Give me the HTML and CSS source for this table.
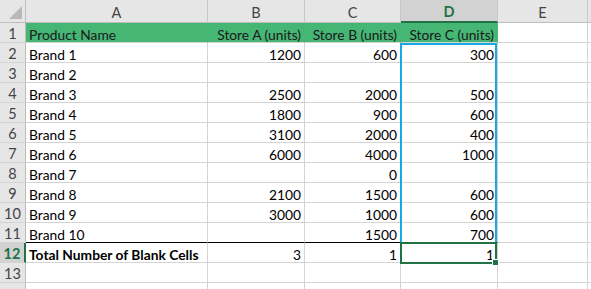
FILE: index.html
```html
<!DOCTYPE html>
<html>
<head>
<meta charset="utf-8">
<link rel="stylesheet" href="styles.css">
</head>
<body>
<div class="sheet">
  <div class="corner"><span class="tri"></span></div>
  <div class="ch">A</div>
  <div class="ch">B</div>
  <div class="ch">C</div>
  <div class="ch sel">D</div>
  <div class="ch">E</div>
  <div class="ch last"></div>

  <div class="rh">1</div>
  <div class="c hd">Product Name</div>
  <div class="c hd r">Store A (units)</div>
  <div class="c hd r">Store B (units)</div>
  <div class="c hd r">Store C (units)</div>
  <div class="c"></div><div class="c last"></div>

  <div class="rh">2</div>
  <div class="c">Brand 1</div><div class="c r">1200</div><div class="c r">600</div><div class="c r">300</div>
  <div class="c"></div><div class="c last"></div>

  <div class="rh">3</div>
  <div class="c">Brand 2</div><div class="c r"></div><div class="c r"></div><div class="c r"></div>
  <div class="c"></div><div class="c last"></div>

  <div class="rh">4</div>
  <div class="c">Brand 3</div><div class="c r">2500</div><div class="c r">2000</div><div class="c r">500</div>
  <div class="c"></div><div class="c last"></div>

  <div class="rh">5</div>
  <div class="c">Brand 4</div><div class="c r">1800</div><div class="c r">900</div><div class="c r">600</div>
  <div class="c"></div><div class="c last"></div>

  <div class="rh">6</div>
  <div class="c">Brand 5</div><div class="c r">3100</div><div class="c r">2000</div><div class="c r">400</div>
  <div class="c"></div><div class="c last"></div>

  <div class="rh">7</div>
  <div class="c">Brand 6</div><div class="c r">6000</div><div class="c r">4000</div><div class="c r">1000</div>
  <div class="c"></div><div class="c last"></div>

  <div class="rh">8</div>
  <div class="c">Brand 7</div><div class="c r"></div><div class="c r">0</div><div class="c r"></div>
  <div class="c"></div><div class="c last"></div>

  <div class="rh">9</div>
  <div class="c">Brand 8</div><div class="c r">2100</div><div class="c r">1500</div><div class="c r">600</div>
  <div class="c"></div><div class="c last"></div>

  <div class="rh">10</div>
  <div class="c">Brand 9</div><div class="c r">3000</div><div class="c r">1000</div><div class="c r">600</div>
  <div class="c"></div><div class="c last"></div>

  <div class="rh">11</div>
  <div class="c blk">Brand 10</div><div class="c r blk"></div><div class="c r blk">1500</div><div class="c r blk">700</div>
  <div class="c"></div><div class="c last"></div>

  <div class="rh sel">12</div>
  <div class="c b">Total Number of Blank Cells</div><div class="c r">3</div><div class="c r">1</div><div class="c r">1</div>
  <div class="c"></div><div class="c last"></div>

  <div class="rh">13</div>
  <div class="c"></div><div class="c"></div><div class="c"></div><div class="c"></div>
  <div class="c"></div><div class="c last"></div>

  <div class="rh"></div>
  <div class="c"></div><div class="c"></div><div class="c"></div><div class="c"></div>
  <div class="c"></div><div class="c last"></div>

  <div class="range"></div>
  <div class="active"><span class="handle"></span></div>
</div>
</body>
</html>
```
FILE: styles.css
```css
html, body {
  margin: 0;
  padding: 0;
  background: #ffffff;
  overflow: hidden;
}
.sheet {
  position: relative;
  display: grid;
  grid-template-columns: 26px 182px 97px 96px 97px 90px 10px;
  grid-template-rows: 23px repeat(14, 20px);
  font-family: "Lato", "Liberation Sans", sans-serif;
  font-size: 13.8px;
  color: #000;
}
.corner {
  position: relative;
  background: #e6e6e6;
  border-right: 1px solid #bdbdbd;
  border-bottom: 1px solid #bdbdbd;
}
.tri {
  position: absolute;
  right: 3px;
  bottom: 3px;
  width: 0;
  height: 0;
  border-left: 13px solid transparent;
  border-bottom: 13px solid #b8b8b8;
}
.ch {
  background: #e6e6e6;
  border-right: 1px solid #c8c8c8;
  border-bottom: 1px solid #bdbdbd;
  color: #444;
  font-size: 14.5px;
  display: flex;
  align-items: center;
  justify-content: center;
  padding-top: 2px;
}
.ch.sel {
  background: #d2d2d2;
  color: #217346;
  font-weight: bold;
  border-bottom: 2px solid #217346;
}
.rh {
  background: #e6e6e6;
  border-right: 1px solid #bdbdbd;
  border-bottom: 1px solid #d4d4d4;
  color: #444;
  font-size: 14.5px;
  display: flex;
  align-items: center;
  justify-content: center;
  padding-top: 2px;
}
.rh.sel {
  background: #d2d2d2;
  color: #217346;
  font-weight: bold;
  border-right: 2px solid #217346;
}
.c {
  border-right: 1px solid #d4d4d4;
  border-bottom: 1px solid #d4d4d4;
  display: flex;
  align-items: center;
  padding: 3px 3px 0 3px;
  white-space: nowrap;
  overflow: visible;
}
.c.r {
  justify-content: flex-end;
}
.c.hd {
  background: #45b674;
  border-right-color: #45b674;
  border-bottom-color: #d4d4d4;
  color: #1a1a1a;
}
.c.b {
  font-weight: bold;
}
.c.blk {
  border-bottom-color: #000;
}
.last {
  border-right: none;
}
.range {
  position: absolute;
  left: 400px;
  top: 43px;
  width: 93px;
  height: 199px;
  border: 2px solid #1aa7e6;
  border-bottom: none;
  pointer-events: none;
}
.active {
  position: absolute;
  left: 400px;
  top: 242px;
  width: 93px;
  height: 18px;
  border: 2px solid #217346;
  pointer-events: none;
}
.handle {
  position: absolute;
  right: -4px;
  bottom: -4px;
  width: 5px;
  height: 5px;
  background: #217346;
  border: 1px solid #fff;
}
```
